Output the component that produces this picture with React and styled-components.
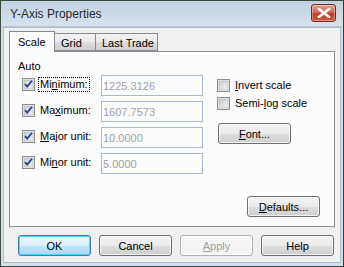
import React from 'react';
import styled, { createGlobalStyle } from 'styled-components';

const GlobalStyle = createGlobalStyle`
    html, body {
        margin: 0;
        padding: 0;
        background: #ffffff;
    }
    * {
        box-sizing: border-box;
    }
`;

const leftRows = [
    { key: 'min', pre: 'Mi', u: 'n', post: 'imum:', value: '1225.3126', focus: true },
    { key: 'max', pre: 'Ma', u: 'x', post: 'imum:', value: '1607.7573' },
    { key: 'major', pre: '', u: 'M', post: 'ajor unit:', value: '10.0000' },
    { key: 'minor', pre: 'Mi', u: 'n', post: 'or unit:', value: '5.0000' },
];

const tabs = [
    { label: 'Scale', width: 46, active: true },
    { label: 'Grid', width: 42 },
    { label: 'Last Trade', width: 63 },
];

function CheckBox({ checked }) {
    return (
        <svg width="13" height="13" viewBox="0 0 13 13">
            <defs>
                <linearGradient id="cbFill" x1="0" y1="0" x2="1" y2="1">
                    <stop offset="0" stopColor="#c9ccd1" />
                    <stop offset="1" stopColor="#f3f3f3" />
                </linearGradient>
            </defs>
            <rect x="0.5" y="0.5" width="12" height="12" fill="#f4f4f4" stroke="#8e8f8f" />
            <rect x="2" y="2" width="9" height="9" fill="url(#cbFill)" stroke="#a9abae" strokeWidth="0.6" />
            {checked && (
                <path d="M3 6.2 L5.2 8.6 L10 2.8" fill="none" stroke="#27409a" strokeWidth="1.8" />
            )}
        </svg>
    );
}

function App() {
    return (
        <>
            <GlobalStyle />
            <Window>
                <TitleBar>
                    <Title>Y-Axis Properties</Title>
                    <CloseBtn>
                        <svg width="14" height="10" viewBox="0 0 14 10">
                            <path d="M2 1 L12 9 M12 1 L2 9" stroke="#ffffff" strokeWidth="2.6" strokeLinecap="square" />
                        </svg>
                    </CloseBtn>
                </TitleBar>

                <Client>
                    <TabStrip>
                        {tabs.map(t => (
                            <Tab key={t.label} $active={t.active} $w={t.width}>{t.label}</Tab>
                        ))}
                    </TabStrip>

                    <Panel>
                        <Columns>
                            <LeftCol>
                                <AutoLabel>Auto</AutoLabel>
                                {leftRows.map(r => (
                                    <FieldRow key={r.key}>
                                        <CheckLabel>
                                            <CheckBox checked />
                                            <LabelText $focus={r.focus}>
                                                {r.pre}<u>{r.u}</u>{r.post}
                                            </LabelText>
                                        </CheckLabel>
                                        <TextBox>{r.value}</TextBox>
                                    </FieldRow>
                                ))}
                            </LeftCol>

                            <RightCol>
                                <CheckLabel>
                                    <CheckBox />
                                    <LabelText><u>I</u>nvert scale</LabelText>
                                </CheckLabel>
                                <CheckLabel>
                                    <CheckBox />
                                    <LabelText>Semi-<u>l</u>og scale</LabelText>
                                </CheckLabel>
                                <FontButton><u>F</u>ont...</FontButton>
                            </RightCol>
                        </Columns>

                        <PanelFooter>
                            <Button><u>D</u>efaults...</Button>
                        </PanelFooter>
                    </Panel>

                    <ButtonRow>
                        <Button $default>OK</Button>
                        <Button>Cancel</Button>
                        <Button disabled><u>A</u>pply</Button>
                        <Button>Help</Button>
                    </ButtonRow>
                </Client>
            </Window>
        </>
    );
}

export default App;


const Window = styled.div`
    width: 344px;
    height: 267px;
    display: flex;
    flex-direction: column;
    border: 1px solid #3b4a3d;
    border-right-color: #2e3b30;
    background: #d3dfeb;
    font-family: "Liberation Sans", Arial, sans-serif;
    font-size: 11px;
    color: #000;
    overflow: hidden;
`;

const TitleBar = styled.div`
    height: 26px;
    display: flex;
    align-items: center;
    justify-content: space-between;
    padding: 0 7px 0 9px;
    background: linear-gradient(#c2d1e0, #cedbe8 60%, #d6e1ec);
    border-bottom: 1px solid #b7c6d6;
`;

const Title = styled.div`
    font-size: 12px;
    color: #2a2a2a;
    margin-top: 1px;
`;

const CloseBtn = styled.div`
    width: 25px;
    height: 18px;
    margin-top: -2px;
    display: flex;
    align-items: center;
    justify-content: center;
    border: 1px solid #6e2b2b;
    border-radius: 3px;
    background: linear-gradient(#e8a393, #d46a55 45%, #c13b24 55%, #d45a3c);
    box-shadow: inset 0 0 0 1px rgba(255, 255, 255, 0.35);
`;

const Client = styled.div`
    flex: 1;
    margin: 0 2px 3px 2px;
    background: #f0f0f0;
    border: 1px solid #aebccb;
    padding: 2px 5px 0 5px;
    display: flex;
    flex-direction: column;
`;

const TabStrip = styled.div`
    display: flex;
    align-items: flex-end;
    height: 21px;
    position: relative;
    z-index: 1;
`;

const Tab = styled.div`
    width: ${p => p.$w}px;
    height: ${p => (p.$active ? '21px' : '18px')};
    margin-bottom: ${p => (p.$active ? '-1px' : '0')};
    margin-left: -1px;
    padding: ${p => (p.$active ? '0 0 1px 8px' : '1px 0 0 6px')};
    display: flex;
    align-items: center;
    white-space: nowrap;
    border: 1px solid #898c95;
    border-bottom: ${p => (p.$active ? 'none' : '1px solid #898c95')};
    background: ${p => (p.$active ? '#fcfcfc' : 'linear-gradient(#f2f2f2, #ebebeb 50%, #dddddd 51%, #cfcfcf)')};
    font-size: 11px;
    &:first-child { margin-left: 0; }
`;

const Panel = styled.div`
    height: 176px;
    border: 1px solid #898c95;
    background: #fcfcfc;
    display: flex;
    flex-direction: column;
    padding: 7px 14px 9px 8px;
`;

const Columns = styled.div`
    display: flex;
    flex: 1;
`;

const LeftCol = styled.div`
    width: 185px;
    display: flex;
    flex-direction: column;
`;

const AutoLabel = styled.div`
    height: 15px;
    line-height: 15px;
`;

const FieldRow = styled.div`
    display: flex;
    align-items: center;
    justify-content: space-between;
    height: 21px;
    margin-top: 5px;
    padding-left: 4px;
    &:nth-of-type(2) { margin-top: 1px; }
`;

const CheckLabel = styled.label`
    display: flex;
    align-items: center;
    gap: 4px;
    height: 15px;
    margin-top: -3px;
    svg { flex: none; }
`;

const LabelText = styled.span`
    line-height: 13px;
    padding: 0 1px;
    outline: ${p => (p.$focus ? '1px dotted #000' : 'none')};
    u { text-decoration: underline; text-underline-offset: 1px; }
`;

const TextBox = styled.div`
    width: 102px;
    height: 21px;
    border: 1px solid #a3bbd4;
    background: #fcfcfc;
    color: #a0a0a0;
    padding: 0 1px;
    display: flex;
    align-items: center;
`;

const RightCol = styled.div`
    margin-left: 14px;
    padding-top: 20px;
    display: flex;
    flex-direction: column;
    gap: 5px;
    label { margin-top: 0; height: 13px; }
`;

const Button = styled.button`
    width: 73px;
    height: 21px;
    padding: 0;
    font-family: "Liberation Sans", Arial, sans-serif;
    font-size: 11px;
    color: ${p => (p.disabled ? '#a0a0a0' : '#000')};
    border: 1px solid ${p => (p.disabled ? '#adb2b5' : p.$default ? '#3c7fb1' : '#707070')};
    border-radius: 3px;
    background: ${p => p.disabled
        ? '#f4f4f4'
        : p.$default
            ? 'linear-gradient(#eaf6fd, #d9f0fc 50%, #bee6fd 51%, #a7d9f5)'
            : 'linear-gradient(#f2f2f2, #ebebeb 50%, #dddddd 51%, #cfcfcf)'};
    box-shadow: ${p => (p.$default ? 'inset 0 0 0 1px #48d5fc' : 'inset 0 0 0 1px rgba(255,255,255,0.7)')};
    u { text-decoration: underline; }
`;

const FontButton = styled(Button)`
    margin-top: 8px;
    margin-left: 1px;
`;

const PanelFooter = styled.div`
    display: flex;
    justify-content: flex-end;
`;

const ButtonRow = styled.div`
    display: flex;
    gap: 8px;
    padding: 8px 0 0 9px;
`;
